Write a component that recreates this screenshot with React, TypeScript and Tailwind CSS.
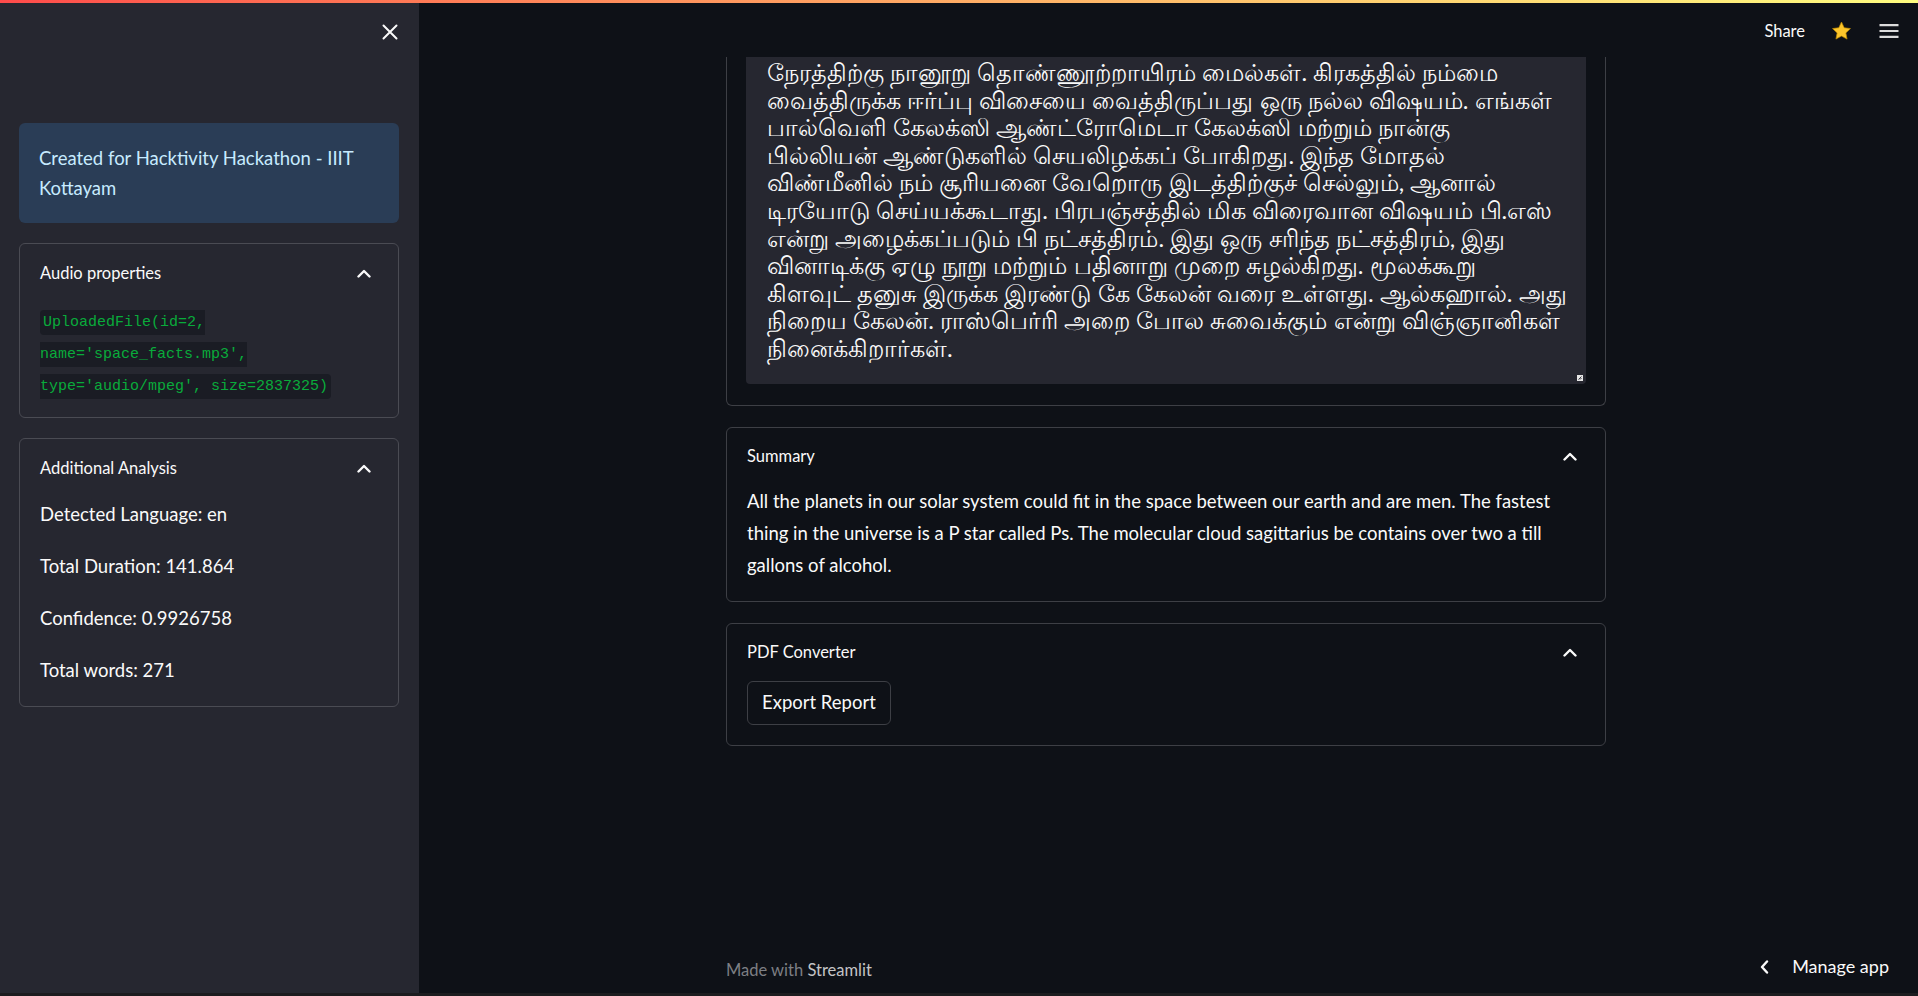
import React from "react";

// ── Icons ─────────────────────────────────────────────────────────────────────

function ChevronUp() {
  return (
    <svg width="14" height="9" viewBox="0 0 14 9" fill="none" stroke="#fafafa" strokeWidth="2.4" strokeLinecap="round" strokeLinejoin="round">
      <path d="M1.5 7.5L7 2l5.5 5.5" />
    </svg>
  );
}

function CloseIcon() {
  return (
    <svg width="16" height="16" viewBox="0 0 16 16" fill="none" stroke="#fafafa" strokeWidth="2" strokeLinecap="round">
      <path d="M1.5 1.5l13 13M14.5 1.5l-13 13" />
    </svg>
  );
}

function StarIcon() {
  return (
    <svg width="21" height="20" viewBox="0 0 24 23">
      <path
        d="M12 1.2l3.1 6.6 7.2.9-5.3 5 1.4 7.1L12 17.3l-6.4 3.5L7 13.7l-5.3-5 7.2-.9L12 1.2z"
        fill="#fcc52b"
        stroke="#c28d00"
        strokeWidth="0.8"
        strokeLinejoin="round"
      />
    </svg>
  );
}

function MenuIcon() {
  return (
    <svg width="20" height="14" viewBox="0 0 20 14" fill="none" stroke="#dcdcdc" strokeWidth="2.2">
      <path d="M0.5 1.2h19M0.5 7h19M0.5 12.8h19" />
    </svg>
  );
}

function ChevronLeft() {
  return (
    <svg width="9" height="14" viewBox="0 0 9 14" fill="none" stroke="#fafafa" strokeWidth="2.4" strokeLinecap="round" strokeLinejoin="round">
      <path d="M7 1.5L2 7l5 5.5" />
    </svg>
  );
}

function ResizeHandle() {
  return (
    <svg width="6" height="6" viewBox="0 0 6 6">
      <rect x="0" y="0" width="6" height="6" fill="#e6e6e6" />
      <path d="M1.5 4.5L4.5 1.5M3 4.5l1.5-1.5" stroke="#262730" strokeWidth="0.9" />
    </svg>
  );
}

// ── Sub-components ────────────────────────────────────────────────────────────

function SideExpander({ title, children }: { title: string; children: React.ReactNode }) {
  return (
    <div className="border border-[#4a4b53] rounded-[6px]">
      <div className="h-[59px] flex items-center justify-between pl-[20px] pr-[27px] text-[16.5px]">
        <span>{title}</span>
        <ChevronUp />
      </div>
      <div className="px-[20px]">{children}</div>
    </div>
  );
}

function MainExpander({ title, children }: { title: string; children: React.ReactNode }) {
  return (
    <div className="border border-[#3d3f45] rounded-[6px]">
      <div className="h-[57px] flex items-center justify-between pl-[20px] pr-[28px] text-[16.5px]">
        <span>{title}</span>
        <ChevronUp />
      </div>
      <div className="px-[20px]">{children}</div>
    </div>
  );
}

// ── Data ──────────────────────────────────────────────────────────────────────

const TRANSCRIPT = [
  "நேரத்திற்கு நானூறு தொண்ணூற்றாயிரம் மைல்கள். கிரகத்தில் நம்மை",
  "வைத்திருக்க ஈர்ப்பு விசையை வைத்திருப்பது ஒரு நல்ல விஷயம். எங்கள்",
  "பால்வெளி கேலக்ஸி ஆண்ட்ரோமெடா கேலக்ஸி மற்றும் நான்கு",
  "பில்லியன் ஆண்டுகளில் செயலிழக்கப் போகிறது. இந்த மோதல்",
  "விண்மீனில் நம் சூரியனை வேறொரு இடத்திற்குச் செல்லும், ஆனால்",
  "டிரயோடு செய்யக்கூடாது. பிரபஞ்சத்தில் மிக விரைவான விஷயம் பி.எஸ்",
  "என்று அழைக்கப்படும் பி நட்சத்திரம். இது ஒரு சரிந்த நட்சத்திரம், இது",
  "வினாடிக்கு ஏழு நூறு மற்றும் பதினாறு முறை சுழல்கிறது. மூலக்கூறு",
  "கிளவுட் தனுசு இருக்க இரண்டு கே கேலன் வரை உள்ளது. ஆல்கஹால். அது",
  "நிறைய கேலன். ராஸ்பெர்ரி அறை போல சுவைக்கும் என்று விஞ்ஞானிகள்",
  "நினைக்கிறார்கள்.",
];

const STATS = [
  "Detected Language: en",
  "Total Duration: 141.864",
  "Confidence: 0.9926758",
  "Total words: 271",
];

// ── Screen ────────────────────────────────────────────────────────────────────

export default function App() {
  return (
    <div className="relative h-[996px] w-[1918px] flex flex-col overflow-hidden bg-[#0e1117] text-[#fafafa] font-['Lato',sans-serif]">
      {/* Decoration bar */}
      <div className="flex-none h-[3px] bg-gradient-to-r from-[#ff4b4b] to-[#fffd80]" />

      <div className="flex-1 flex min-h-0">
        {/* Sidebar */}
        <aside className="flex-none w-[419px] bg-[#262730] flex flex-col">
          <div className="h-[58px] flex items-center justify-end pr-[21px]">
            <CloseIcon />
          </div>
          <div className="pt-[62px] pl-[19px] pr-[20px] flex flex-col gap-[20px]">
            <div className="rounded-[6px] bg-[#2a3d56] px-[20px] py-[20px] text-[18.5px] leading-[30px] text-[#c7ebff]">
              Created for Hacktivity Hackathon - IIIT Kottayam
            </div>

            <SideExpander title="Audio properties">
              <p className="text-[18.5px] leading-[32px] mb-[18px]">
                <code className="font-['Liberation_Mono',monospace] text-[15px] leading-[18px] text-[#09ab3b] bg-[#1a1c24] px-[3px] py-[4px] rounded-[4px]">
                  UploadedFile(id=2, name='space_facts.mp3', type='audio/mpeg', size=2837325)
                </code>
              </p>
            </SideExpander>

            <SideExpander title="Additional Analysis">
              {STATS.map((s) => (
                <p key={s} className="text-[18.5px] leading-[32px] mb-[20px]">
                  {s}
                </p>
              ))}
            </SideExpander>
          </div>
        </aside>

        {/* Main */}
        <main className="relative flex-1 flex flex-col min-w-0">
          {/* Header */}
          <div className="flex-none h-[54px] pt-[2px] flex items-center justify-end pr-[19px]">
            <span className="text-[16.5px] mr-[26px]">Share</span>
            <span className="mr-[27px] flex items-center"><StarIcon /></span>
            <MenuIcon />
          </div>

          {/* Body */}
          <div className="flex justify-center pr-[5px]">
            <div className="w-[880px] flex flex-col gap-[21px]">
              {/* Transcript (scrolled) */}
              <div className="border-x border-b border-[#3d3f45] rounded-b-[6px] px-[19px] pb-[21px]">
                <div className="relative h-[327px] bg-[#262730] rounded-b-[4px] overflow-hidden pl-[21px] pr-[12px]">
                  <div className="pt-[1px] text-[24px] leading-[27.6px]">
                    {TRANSCRIPT.map((line, i) => (
                      <div key={i} className="whitespace-nowrap">{line}</div>
                    ))}
                  </div>
                  <div className="absolute right-[3px] bottom-[3px] flex">
                    <ResizeHandle />
                  </div>
                </div>
              </div>

              <MainExpander title="Summary">
                <p className="text-[18.5px] leading-[32px] mb-[20px]">
                  All the planets in our solar system could fit in the space between our earth and are men. The fastest thing in the universe is a P star called Ps. The molecular cloud sagittarius be contains over two a till gallons of alcohol.
                </p>
              </MainExpander>

              <MainExpander title="PDF Converter">
                <div className="mb-[20px]">
                  <button
                    type="button"
                    className="h-[44px] px-[14px] rounded-[6px] border border-[#3d3f45] bg-[#0e1117] text-[18.5px] text-[#fafafa]"
                  >
                    Export Report
                  </button>
                </div>
              </MainExpander>
            </div>
          </div>

          <div className="flex-1" />

          {/* Footer */}
          <div className="flex-none h-[35px] flex justify-center pr-[5px]">
            <div className="w-[880px] text-[16.5px] leading-[24px] text-[#7d7f84]">
              Made with <span className="text-[#c4c4c6]">Streamlit</span>
            </div>
          </div>

          {/* Manage app overlay */}
          <div className="absolute right-[29px] bottom-[13px] flex items-center gap-[23px] text-[18px]">
            <ChevronLeft />
            <span>Manage app</span>
          </div>
        </main>
      </div>

      {/* Bottom strip */}
      <div className="flex-none h-[3px] bg-[#1c1c1f]" />
    </div>
  );
}
